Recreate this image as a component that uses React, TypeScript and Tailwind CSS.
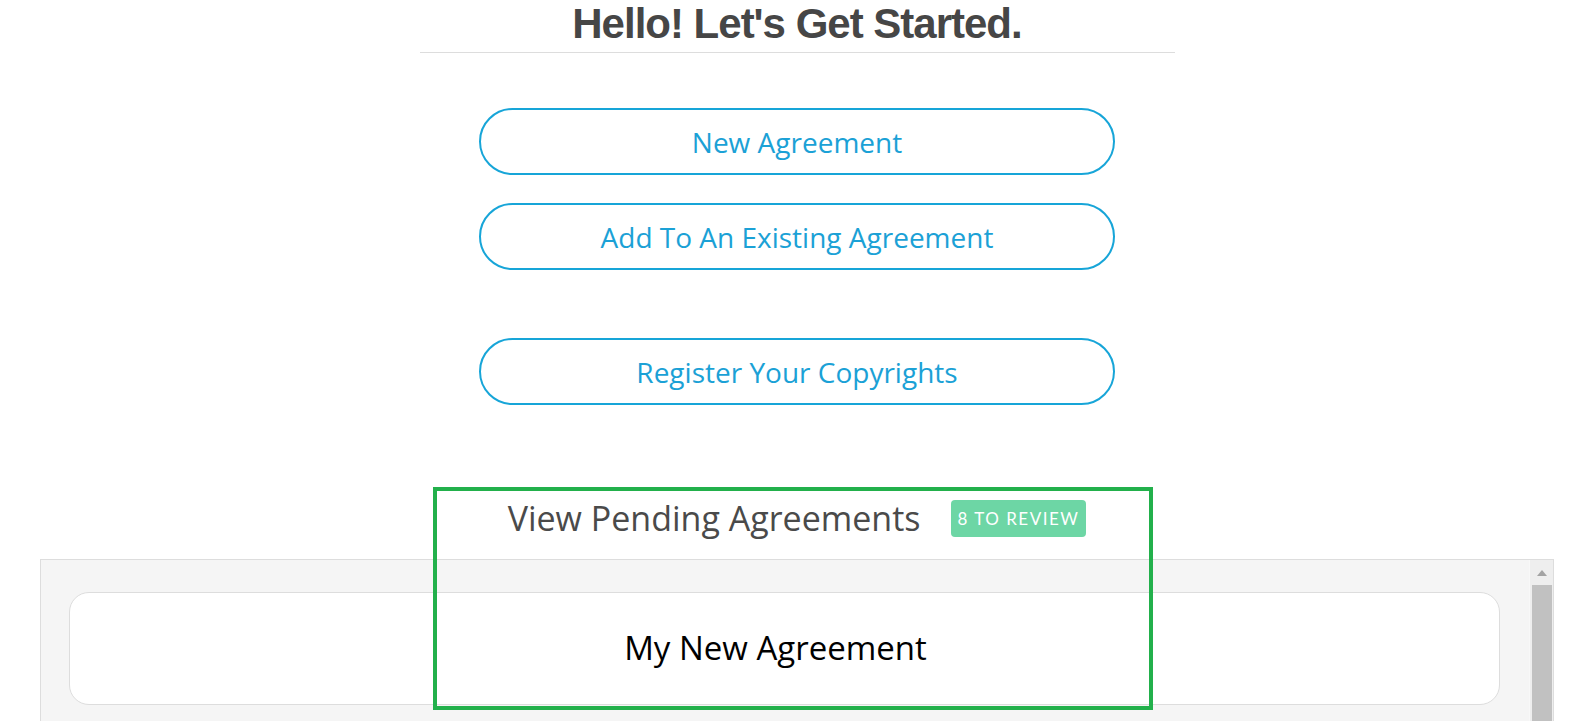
import React from "react";

const actions = ["New Agreement", "Add To An Existing Agreement"];

function PillButton({ label }: { label: string }) {
  return (
    <button className="w-[636px] h-[67px] rounded-full border-2 border-[#17a5d8] bg-white text-[#1ba1d6] text-[28px] font-['Open_Sans',sans-serif] flex items-center justify-center">
      {label}
    </button>
  );
}

export default function App() {
  return (
    <div className="relative w-full h-[721px] overflow-hidden bg-white">
      <div className="flex flex-col items-center">
        <h1 className="text-[42px] leading-[48px] font-bold tracking-[-1px] text-[#464646] font-['Liberation_Sans',Arial,sans-serif]">
          Hello! Let's Get Started.
        </h1>
        <div className="mt-[4px] w-[755px] h-px bg-[#dddddd]" />

        <div className="mt-[55px] flex flex-col gap-[28px]">
          {actions.map((a) => (
            <PillButton key={a} label={a} />
          ))}
        </div>
        <div className="mt-[68px]">
          <PillButton label="Register Your Copyrights" />
        </div>

        {/* pending */}
        <div className="mt-[95px] h-[37px] flex items-center gap-[30px]">
          <span className="text-[34px] text-[#4a4a4a] font-['Open_Sans',sans-serif] font-normal">
            View Pending Agreements
          </span>
          <span className="h-[37px] px-[7px] rounded-[4px] bg-[#6dd6a5] text-white text-[17px] tracking-[1.5px] uppercase flex items-center font-['Lato',sans-serif]">
            8 to review
          </span>
        </div>
      </div>

      <div className="mt-[22px] mx-[40px] h-[200px] flex border border-[#dddddd] bg-[#f5f5f5]">
        <div className="flex-1 pt-[32px] pl-[28px] pr-[29px]">
          <div className="h-[113px] rounded-[20px] border border-[#dddddd] bg-white flex items-center justify-center">
            <span className="text-[33px] text-black font-['Open_Sans',sans-serif] -ml-[18px] -mt-[2px]">
              My New Agreement
            </span>
          </div>
        </div>
        {/* scrollbar */}
        <div className="w-[24px] bg-[#eeeeee] border-l border-[#f8f8f8] flex flex-col">
          <div className="h-[25px] flex items-center justify-center">
            <div className="w-0 h-0 border-l-[5px] border-r-[5px] border-b-[6px] border-l-transparent border-r-transparent border-b-[#a3a3a3]" />
          </div>
          <div className="flex-1 ml-[2px] mr-[1px] bg-[#c1c1c1]" />
        </div>
      </div>

      {/* highlight */}
      <div className="absolute left-[433px] top-[487px] w-[720px] h-[223px] border-[4px] border-[#22b04b]" />
    </div>
  );
}
